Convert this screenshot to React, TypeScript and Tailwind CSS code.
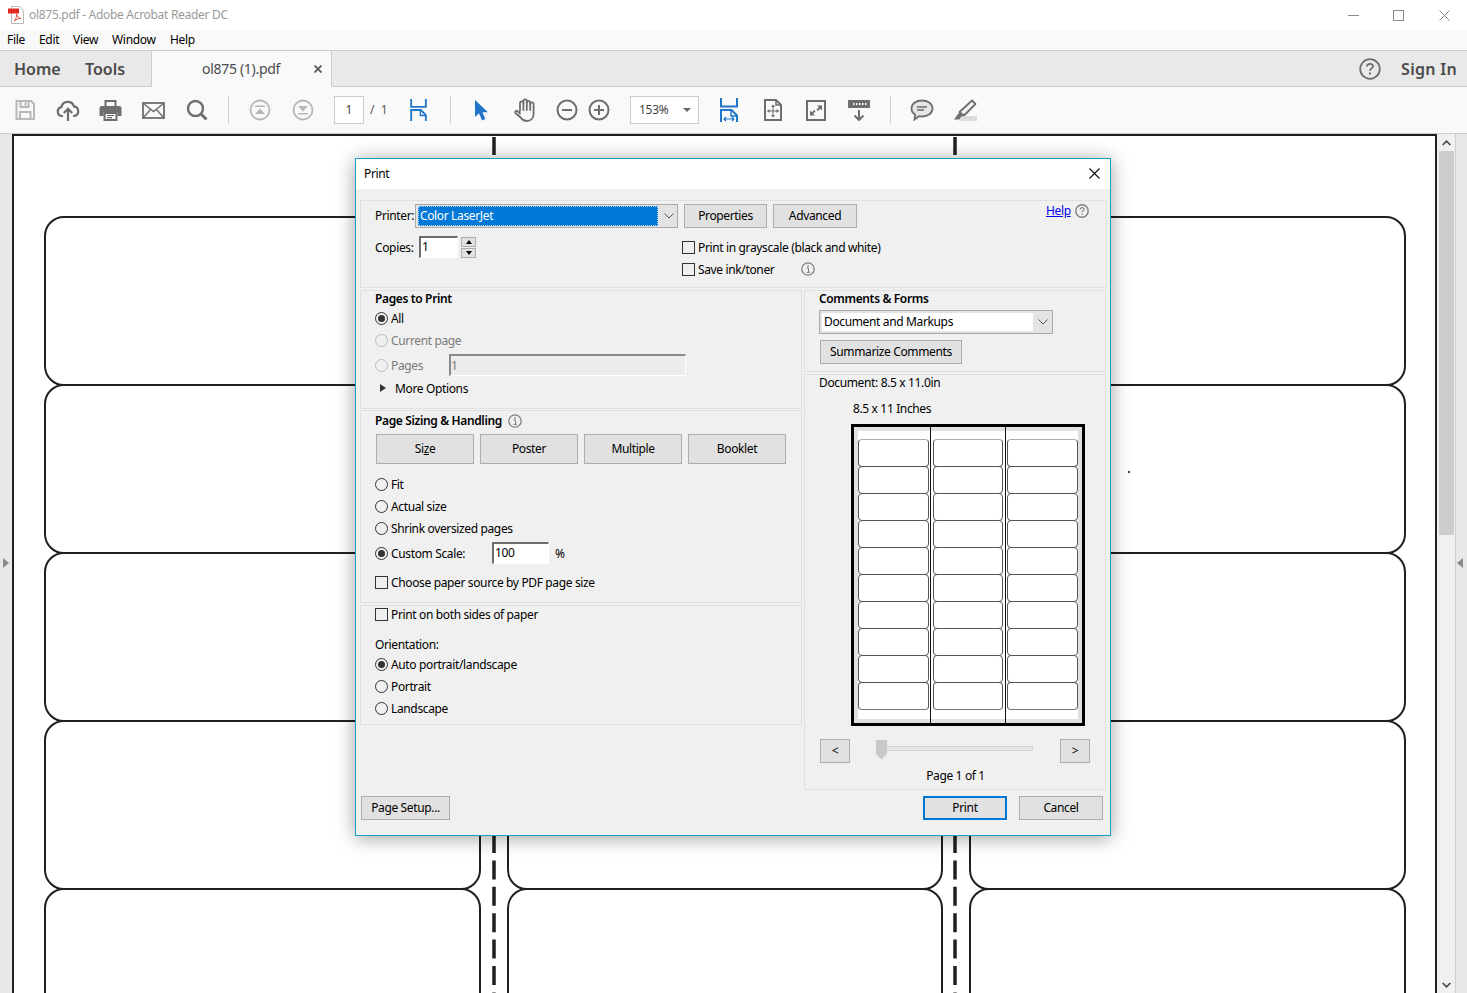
import React from "react";

const F = "font-['Noto_Sans','Liberation_Sans',sans-serif]";
const GRAY = "#6e6e6e";
const DIS = "#b8b8b8";
const BLUE = "#2274c9";

function Slot({ w, children, cls = "" }: { w: string; children: React.ReactNode; cls?: string }) {
  return <div className={`flex items-center justify-center shrink-0 ${w} ${cls}`}>{children}</div>;
}
function Sep({ ml }: { ml: string }) {
  return <div className={`w-px h-[28px] bg-[#cfcfcf] shrink-0 ${ml}`} />;
}

const Ico = {
  Save: () => (
    <svg width="22" height="22" viewBox="0 0 22 22" fill="none" stroke={DIS} strokeWidth="2">
      <path d="M2.500 2h14.500l3 3v15H2.500z" />
      <path d="M6.500 2v6h8V2M11.500 3.500v3M6 20v-7h10.500v7" />
    </svg>
  ),
  Upload: () => (
    <svg width="24" height="24" viewBox="0 0 24 24" fill="none" stroke={GRAY} strokeWidth="2.200">
      <path d="M7 18H6a4.500 4.500 0 0 1-.6-8.900A6.500 6.500 0 0 1 18 8.400 4.900 4.900 0 0 1 18.500 18H17" />
      <path d="M12 23V11M7.800 15l4.200-4.300 4.200 4.300" />
    </svg>
  ),
  Print: () => (
    <svg width="23" height="22" viewBox="0 0 23 22">
      <path d="M5.500 1h12v6h-2V3h-8v4h-2z" fill={GRAY} />
      <path d="M2.500 7h18a2 2 0 0 1 2 2v8h-4v-4h-14v4h-4V9a2 2 0 0 1 2-2z" fill={GRAY} />
      <path d="M5.500 14h12v7h-12z" fill="none" stroke={GRAY} strokeWidth="2" />
      <path d="M8 16.500h7M8 18.700h5" stroke={GRAY} strokeWidth="1.200" />
    </svg>
  ),
  Mail: () => (
    <svg width="23" height="17" viewBox="0 0 23 17" fill="none" stroke={GRAY} strokeWidth="1.800">
      <rect x="1" y="1" width="21" height="15" />
      <path d="M1.500 1.500 11.500 9.500 21.500 1.500M1.500 15.500 8.500 7.500M21.500 15.500 14.500 7.500" strokeWidth="1.400" />
    </svg>
  ),
  Search: () => (
    <svg width="22" height="22" viewBox="0 0 22 22" fill="none" stroke={GRAY} strokeWidth="2.400">
      <circle cx="9.500" cy="9.500" r="7.500" />
      <path d="m15 15 5.500 5.500" strokeWidth="3" />
    </svg>
  ),
  First: () => (
    <svg width="22" height="22" viewBox="0 0 22 22" fill="none">
      <circle cx="11" cy="11" r="9.500" stroke={DIS} strokeWidth="1.800" />
      <path d="M6 6.500h10v1.600H6zM11 9.500l5 5.500H6z" fill={DIS} />
    </svg>
  ),
  Last: () => (
    <svg width="22" height="22" viewBox="0 0 22 22" fill="none">
      <circle cx="11" cy="11" r="9.500" stroke={DIS} strokeWidth="1.800" />
      <path d="M6 14h10v1.600H6zM11 12.500 6 7h10z" fill={DIS} />
    </svg>
  ),
  FitTop: ({ arrow }: { arrow?: boolean }) => (
    <svg width={arrow ? 18 : 17} height={arrow ? 24 : 22} viewBox="0 0 18 24" fill="none" stroke={BLUE} strokeWidth="2">
      <path d="M1 0v8.500h16V0" />
      <path d="M1 24V12h10.500l5.500 5.500V24" />
      <path d="M11 12v6h6" strokeWidth="1.500" />
      {arrow && <path d="M4 21h10M6 19l-2 2 2 2M12 19l2 2-2 2" strokeWidth="1.200" />}
    </svg>
  ),
  Cursor: () => (
    <svg width="14" height="21" viewBox="0 0 14 21">
      <path d="M1 0v17l4-3.700L8 20.500l3.400-1.500-3-6.800h5.600z" fill={BLUE} />
    </svg>
  ),
  Hand: () => (
    <svg width="24" height="24" viewBox="0 0 24 24" fill="none" stroke={GRAY} strokeWidth="1.800" strokeLinecap="round" strokeLinejoin="round">
      <path d="M6 13V5a1.700 1.700 0 0 1 3.400 0V3a1.700 1.700 0 0 1 3.400 0v1.500a1.700 1.700 0 0 1 3.400 0V6a1.700 1.700 0 0 1 3.400 0v10c0 4-2.500 7-7 7-3 0-4.500-1.300-6-3.500L1.500 15c-1-1.500 1-3 2.300-1.700L6 15.500" />
      <path d="M9.400 5v7M12.800 4v8M16.200 5v7" />
    </svg>
  ),
  Minus: () => (
    <svg width="22" height="22" viewBox="0 0 22 22" fill="none" stroke={GRAY} strokeWidth="2">
      <circle cx="11" cy="11" r="9.500" />
      <path d="M6 11h10" />
    </svg>
  ),
  Plus: () => (
    <svg width="22" height="22" viewBox="0 0 22 22" fill="none" stroke={GRAY} strokeWidth="2">
      <circle cx="11" cy="11" r="9.500" />
      <path d="M6 11h10M11 6v10" />
    </svg>
  ),
  FitPage: () => (
    <svg width="18" height="22" viewBox="0 0 18 22" fill="none" stroke={GRAY}>
      <path d="M1 1h11l5 5v15H1z" strokeWidth="2" />
      <path d="M12 1v5h5" strokeWidth="1.500" />
      <path d="M3.500 12h11M9 6.500v11" strokeWidth="1" />
      <path d="M9 5.500l-2 2.500h4zM9 18.500l-2-2.500h4zM3 12l2.500-2v4zM15 12l-2.500-2v4z" fill={GRAY} stroke="none" />
    </svg>
  ),
  Full: () => (
    <svg width="20" height="21" viewBox="0 0 20 21" fill="none">
      <rect x="1" y="1" width="18" height="19" stroke={GRAY} strokeWidth="2" />
      <path d="M11 5.500h5v5l-1.800-1.800-2.400 2.400-1.400-1.400 2.400-2.400zM9 15.500H4v-5l1.800 1.800 2.400-2.400 1.400 1.400-2.400 2.400z" fill={GRAY} />
    </svg>
  ),
  Read: () => (
    <svg width="22" height="22" viewBox="0 0 22 22" fill="none">
      <path d="M0 1h22v8H0z" fill={GRAY} />
      <path d="M5 4h1.500v2H5zM8 4h1.500v2H8zM11 4h1.500v2H11zM14 4h1.500v2H14zM17 4h1.500v2H17z" fill="#fff" />
      <path d="M11 11v10M6.500 16.500l4.500 4.500 4.500-4.500" stroke={GRAY} strokeWidth="2" />
    </svg>
  ),
  Comment: () => (
    <svg width="24" height="22" viewBox="0 0 24 22" fill="none">
      <path d="M12 1.500c6 0 10.500 3.400 10.500 8 0 4.700-4.500 8-10.500 8-1 0-2-.1-3-.3L4.500 20.500l.7-4.700C3 14.300 1.500 12 1.500 9.500c0-4.600 4.500-8 10.500-8z" fill="#e6e6e6" stroke={GRAY} strokeWidth="1.800" />
      <path d="M7 8h10M7 11h7" stroke={GRAY} strokeWidth="1.300" />
    </svg>
  ),
  Mark: () => (
    <svg width="24" height="22" viewBox="0 0 24 22" fill="none">
      <path d="M6 17h18v5H6z" fill="#dcdcdc" />
      <path d="M19 1.500l3.500 3.500-10.500 10.500-4.500 1-1-3.500z" fill="#f4f4f4" stroke={GRAY} strokeWidth="1.800" strokeLinejoin="round" />
      <path d="M7 12l5 5-5 .5-2-2z" fill={GRAY} />
      <path d="M5 15l3 3-2 2.500H1z" fill={GRAY} />
    </svg>
  ),
};

function PdfIcon() {
  return (
    <svg width="16" height="18" viewBox="0 0 16 18" fill="none" className="shrink-0">
      <path d="M3.500.5h8l4 4v13h-12z" fill="#fff" stroke="#b9b9b9" />
      <path d="M0 2.500h11v5H0z" fill="#e02a20" />
      <path d="M6 15c2-1.500 3-5 2.500-7 1 3 2.500 4 4.500 4.500-2-.2-5 .8-7 2.500z" fill="none" stroke="#e02a20" strokeWidth=".8" />
    </svg>
  );
}

function Radio({ label, on, off, cls = "" }: { label: string; on?: boolean; off?: boolean; cls?: string }) {
  return (
    <div className={`flex items-center h-[22px] ${cls}`}>
      <span className={`flex items-center justify-center w-[13px] h-[13px] rounded-full border shrink-0 ${off ? "border-[#bcbcbc]" : "border-[#333]"}`}>
        {on && <span className="w-[7px] h-[7px] rounded-full bg-[#333]" />}
      </span>
      <span className={`ml-[3px] pt-[2px] ${off ? "text-[#7a7a7a]" : ""}`}>{label}</span>
    </div>
  );
}
function Check({ label, cls = "" }: { label: string; cls?: string }) {
  return (
    <div className={`flex items-center ${cls}`}>
      <span className="w-[13px] h-[13px] border border-[#333] shrink-0" />
      <span className="ml-[3px] pt-[2px]">{label}</span>
    </div>
  );
}
function Btn({ w, children, cls = "" }: { w: string; children: React.ReactNode; cls?: string }) {
  return (
    <div className={`flex items-center justify-center h-[24px] bg-[#e1e1e1] border border-[#adadad] shrink-0 ${w} ${cls}`}>
      {children}
    </div>
  );
}
function Sunken({ w, children, cls = "" }: { w: string; children: React.ReactNode; cls?: string }) {
  return (
    <div className={`flex items-center pl-[1px] pb-[1px] h-[22px] border-t-2 border-l-2 border-t-[#6d6d6d] border-l-[#6d6d6d] border-r border-b border-r-white border-b-white shrink-0 ${w} ${cls}`}>
      {children}
    </div>
  );
}
function Info({ cls = "" }: { cls?: string }) {
  return (
    <svg width="14" height="14" viewBox="0 0 14 14" fill="none" className={`shrink-0 ${cls}`}>
      <circle cx="7" cy="7" r="6.200" stroke="#808080" strokeWidth="1.300" />
      <path d="M5.500 6h2v4h1M5.500 10.400h3.500" stroke="#808080" strokeWidth="1" />
      <path d="M6.300 3.200h1.500v1.500H6.300z" fill="#808080" />
    </svg>
  );
}
function Chevron() {
  return (
    <svg width="10" height="6" viewBox="0 0 10 6" fill="none" stroke="#555" strokeWidth="1">
      <path d="M.5.500 5 5l4.500-4.500" />
    </svg>
  );
}

const PANEL = "border border-[#e0e0e0]";

function Preview() {
  const rows = Array.from({ length: 10 }, (_, i) => i);
  return (
    <div className="relative w-[234px] h-[302px] ml-[46px] mt-[7px] border-[3px] border-black bg-[#e0e0e0] p-[4px]">
      <div className="h-[288px] bg-white pt-[8px]">
        <div className="grid grid-cols-[71px_70px_71px] gap-x-[4px]">
          {rows.flatMap((r) =>
            [0, 1, 2].map((c) => (
              <div
                key={`${r}-${c}`}
                className={`h-[28px] rounded-[4px] border border-[#555] ${r > 0 ? "mt-[-1px]" : ""} ${r === 0 ? "border-t-[#aaa]" : ""} ${r === 9 ? "border-b-[#777]" : ""}`}
              />
            ))
          )}
        </div>
      </div>
      <div className="absolute left-[76px] top-0 bottom-0 w-px bg-[#111]" />
      <div className="absolute left-[151px] top-0 bottom-0 w-px bg-[#111]" />
    </div>
  );
}

function PrintDialog() {
  return (
    <div className={`absolute left-[355px] top-[158px] w-[756px] h-[678px] border border-[#1a9fc4] bg-[#f0f0f0] shadow-[0_2px_18px_rgba(0,0,0,0.38)] text-[12px] leading-[16px] text-black ${F} tracking-[-0.36px]`}>
      <div className="h-[30px] bg-white flex items-center justify-between pl-[8px] pr-[10px]">
        <span>Print</span>
        <svg width="11" height="11" viewBox="0 0 11 11" stroke="#111" strokeWidth="1.200" className="mb-[2px]">
          <path d="M.5.500l10 10M10.500.500l-10 10" />
        </svg>
      </div>
      <div className="pl-[4px] pt-[11px]">
        <div className={`w-[747px] h-[88px] ${PANEL}`}>
          <div className="flex items-center h-[24px] mt-[3px] pl-[14px]">
            <span className="w-[40px]">Printer:</span>
            <div className="flex items-center w-[263px] h-[24px] bg-[#e3e3e3] border border-[#a9a9a9] pl-[2px]">
              <div className="w-[240px] h-[20px] bg-[#0078d7] text-white flex items-center pl-[1px] border border-dotted border-[#a8cdf0]">Color LaserJet</div>
              <span className="ml-[6px]"><Chevron /></span>
            </div>
            <Btn w="w-[83px]" cls="ml-[6px]">Properties</Btn>
            <Btn w="w-[84px]" cls="ml-[6px]">Advanced</Btn>
            <div className="flex items-center ml-[189px] self-start mt-[-1px]">
              <span className="text-[#0000ee] underline">Help</span>
              <svg width="14" height="14" viewBox="0 0 14 14" fill="none" className="ml-[4px]">
                <circle cx="7" cy="7" r="6.200" stroke="#808080" strokeWidth="1.400" />
                <path d="M5.200 5.400c0-2.400 3.800-2.400 3.800-.2 0 1.400-2 1.500-2 3" stroke="#808080" strokeWidth="1.200" />
                <path d="M6.400 9.500h1.300v1.300H6.400z" fill="#808080" />
              </svg>
            </div>
          </div>
          <div className="flex mt-[8px] pl-[14px]">
            <span className="w-[44px] h-[22px] pt-[4px]">Copies:</span>
            <Sunken w="w-[39px]" cls="bg-white">1</Sunken>
            <div className="ml-[3px] w-[15px] flex flex-col gap-px pt-px">
              <div className="h-[10px] bg-[#e1e1e1] border border-[#adadad] flex items-center justify-center">
                <span className="w-0 h-0 border-x-[3px] border-x-transparent border-b-[4px] border-b-black" />
              </div>
              <div className="h-[10px] bg-[#e1e1e1] border border-[#adadad] flex items-center justify-center">
                <span className="w-0 h-0 border-x-[3px] border-x-transparent border-t-[4px] border-t-black" />
              </div>
            </div>
            <div className="ml-[206px]">
              <Check label="Print in grayscale (black and white)" cls="h-[22px]" />
              <div className="flex items-center">
                <Check label="Save ink/toner" cls="h-[22px] w-[119px]" />
                <Info />
              </div>
            </div>
          </div>
        </div>

        <div className="flex mt-[2px]">
          <div className="w-[442px]">
            <div className={`h-[119px] pl-[14px] ${PANEL}`}>
              <div className="h-[16px] flex items-center font-semibold">Pages to Print</div>
              <Radio label="All" on />
              <Radio label="Current page" off />
              <div className="flex items-center mt-[3px]">
                <Radio label="Pages" off cls="w-[74px]" />
                <div className="flex items-center w-[237px] h-[22px] border-t-2 border-l-2 border-t-[#8a8a8a] border-l-[#8a8a8a] border-r border-b border-r-white border-b-white bg-[#ececec] text-[#7a7a7a]">1</div>
              </div>
              <div className="flex items-center h-[22px] mt-px pl-[5px]">
                <span className="w-0 h-0 border-y-[4px] border-y-transparent border-l-[6px] border-l-[#333]" />
                <span className="ml-[9px] pt-[2px]">More Options</span>
              </div>
            </div>
            <div className={`h-[193px] mt-px pl-[14px] ${PANEL}`}>
              <div className="h-[19px] flex items-center font-semibold">
                Page Sizing &amp; Handling
                <Info cls="ml-[6px]" />
              </div>
              <div className="flex gap-[6px] mt-[4px] ml-px">
                <Btn w="w-[98px]" cls="h-[30px]!"><span>Si<span className="underline">z</span>e</span></Btn>
                <Btn w="w-[98px]" cls="h-[30px]!">Poster</Btn>
                <Btn w="w-[98px]" cls="h-[30px]!">Multiple</Btn>
                <Btn w="w-[98px]" cls="h-[30px]!">Booklet</Btn>
              </div>
              <Radio label="Fit" cls="mt-[9px]" />
              <Radio label="Actual size" />
              <Radio label="Shrink oversized pages" />
              <div className="flex items-center mt-[3px]">
                <Radio label="Custom Scale:" on cls="w-[117px]" />
                <Sunken w="w-[57px]" cls="bg-white">100</Sunken>
                <span className="ml-[6px] pt-[1px]">%</span>
              </div>
              <Check label="Choose paper source by PDF page size" cls="h-[22px] mt-[7px]" />
            </div>
            <div className={`h-[120px] mt-[2px] pl-[14px] ${PANEL}`}>
              <Check label="Print on both sides of paper" cls="h-[16px]" />
              <div className="h-[18px] mt-[13px] pt-[2px]">Orientation:</div>
              <Radio label="Auto portrait/landscape" on />
              <Radio label="Portrait" />
              <Radio label="Landscape" />
            </div>
          </div>

          <div className="w-[302px] ml-[2px]">
            <div className={`h-[82px] pl-[14px] ${PANEL}`}>
              <div className="h-[15px] flex items-center font-semibold">Comments &amp; Forms</div>
              <div className="flex items-center w-[234px] h-[24px] mt-[4px] bg-[#e3e3e3] border border-[#a9a9a9] pl-[2px]">
                <div className="w-[211px] h-[18px] bg-white flex items-center pl-[2px]">Document and Markups</div>
                <span className="ml-[5px]"><Chevron /></span>
              </div>
              <Btn w="w-[142px]" cls="mt-[6px] ml-px">Summarize Comments</Btn>
            </div>
            <div className={`h-[416px] mt-[2px] ${PANEL}`}>
              <div className="h-[15px] flex items-center pl-[14px]">Document: 8.5 x 11.0in</div>
              <div className="h-[16px] mt-[11px] flex items-center pl-[48px]">8.5 x 11 Inches</div>
              <Preview />
              <div className="flex items-center mt-[13px] ml-[15px]">
                <Btn w="w-[30px]">&lt;</Btn>
                <div className="relative self-start mt-[7px] w-[157px] h-[5px] ml-[26px] bg-[#e4e4e4] border border-[#d4d4d4]">
                  <svg width="12" height="20" viewBox="0 0 12 20" className="absolute left-[-1px] top-[-7px]">
                    <path d="M0 0h11v14l-5.500 5.500L0 14z" fill="#c8c8c8" />
                  </svg>
                </div>
                <Btn w="w-[30px]" cls="ml-[27px]">&gt;</Btn>
              </div>
              <div className="h-[16px] mt-[5px] flex justify-center items-center pl-px">Page 1 of 1</div>
            </div>
          </div>
        </div>

        <div className="flex items-center mt-[6px] ml-px">
          <Btn w="w-[89px]">Page Setup...</Btn>
          <Btn w="w-[84px]" cls="ml-[473px] border-2! border-[#0078d7]!">Print</Btn>
          <Btn w="w-[84px]" cls="ml-[12px]">Cancel</Btn>
        </div>
      </div>
    </div>
  );
}

function LabelColumn({ w }: { w: string }) {
  return (
    <div className={`${w} shrink-0 pt-[80px]`}>
      {[0, 1, 2, 3, 4].map((i) => (
        <div key={i} className={`h-[170px] rounded-[20px] border-2 border-[#231f20] ${i > 0 ? "mt-[-2px]" : ""}`} />
      ))}
    </div>
  );
}
function Gutter({ x }: { x: number }) {
  return (
    <svg width="26" height="857" viewBox="0 0 26 857" className="shrink-0">
      <path d={`M${x} 1v18`} stroke="#231f20" strokeWidth="3.500" />
      <path d={`M${x} 698v159`} stroke="#231f20" strokeWidth="3.500" strokeDasharray="19 7.400" />
    </svg>
  );
}

export default function App() {
  return (
    <div className={`relative w-full h-screen overflow-hidden flex flex-col bg-white ${F}`}>
      {/* Title bar */}
      <div className="h-[30px] flex items-center bg-white shrink-0 pl-[8px] text-[12px] text-[#9a9a9a] tracking-[-0.3px]">
        <PdfIcon />
        <span className="ml-[5px]">ol875.pdf - Adobe Acrobat Reader DC</span>
        <div className="ml-auto flex items-center">
          <Slot w="w-[45px]">
            <svg width="11" height="11" viewBox="0 0 11 11" stroke="#8a8a8a"><path d="M0 5.500h11" /></svg>
          </Slot>
          <Slot w="w-[45px]">
            <svg width="11" height="11" viewBox="0 0 11 11" fill="none" stroke="#8a8a8a"><rect x=".5" y=".5" width="10" height="10" /></svg>
          </Slot>
          <Slot w="w-[46px]">
            <svg width="11" height="11" viewBox="0 0 11 11" stroke="#8a8a8a"><path d="M.5.500l10 10M10.500.500l-10 10" /></svg>
          </Slot>
        </div>
      </div>
      {/* Menu bar */}
      <div className="h-[20px] flex items-center bg-[#f9f9f9] shrink-0 pl-[7px] text-[12px] text-black tracking-[-0.3px]">
        <span className="w-[32px]">File</span>
        <span className="w-[34px]">Edit</span>
        <span className="w-[39px]">View</span>
        <span className="w-[58px]">Window</span>
        <span>Help</span>
      </div>
      {/* Tab bar */}
      <div className="h-[37px] flex items-stretch bg-[#e9e9e9] border-y border-[#cccccc] shrink-0 text-[#4b4b4b]">
        <div className="w-[151px] flex items-center pl-[14px] text-[16px] font-semibold">
          <span className="w-[71px]">Home</span>
          <span>Tools</span>
        </div>
        <div className="w-[181px] flex items-center bg-[#f9f9f9] border-x border-[#cccccc] mb-[-1px] text-[14px] tracking-[-0.3px]">
          <span className="ml-[50px] w-[112px] pb-[1px]">ol875 (1).pdf</span>
          <svg width="8" height="8" viewBox="0 0 8 8" stroke="#5a5a5a" strokeWidth="1.800"><path d="M.5.500l7 7M7.500.500l-7 7" /></svg>
        </div>
        <div className="ml-auto flex items-center pr-[10px]">
          <svg width="22" height="22" viewBox="0 0 22 22" fill="none">
            <circle cx="11" cy="11" r="9.800" stroke={GRAY} strokeWidth="1.800" />
            <path d="M8 8.400c0-3.400 6-3.400 6-.2 0 2.200-3 2.200-3 4.600" stroke={GRAY} strokeWidth="1.800" />
            <path d="M10 14.600h2v2h-2z" fill={GRAY} />
          </svg>
          <span className="ml-[20px] text-[16px] font-semibold tracking-[0.3px]">Sign In</span>
        </div>
      </div>
      {/* Toolbar */}
      <div className="h-[47px] flex items-center bg-[#f9f9f9] border-b border-[#cccccc] shrink-0 pl-[3px] text-[12px] text-[#444]">
        <Slot w="w-[43px]"><Ico.Save /></Slot>
        <Slot w="w-[43px]"><Ico.Upload /></Slot>
        <Slot w="w-[43px]"><Ico.Print /></Slot>
        <Slot w="w-[43px]"><Ico.Mail /></Slot>
        <Slot w="w-[43px]"><Ico.Search /></Slot>
        <Sep ml="ml-[10px]" />
        <Slot w="w-[43px]" cls="ml-[9px]"><Ico.First /></Slot>
        <Slot w="w-[43px]"><Ico.Last /></Slot>
        <div className="ml-[10px] w-[30px] h-[28px] bg-white border border-[#cccccc] flex items-center justify-center">1</div>
        <div className="w-[36px] pl-[6px] text-[#555]">/&nbsp;&nbsp;1</div>
        <Slot w="w-[36px]"><Ico.FitTop /></Slot>
        <Sep ml="ml-[14px]" />
        <Slot w="w-[36px]" cls="ml-[12px]"><Ico.Cursor /></Slot>
        <Slot w="w-[36px]" cls="ml-[9px]"><Ico.Hand /></Slot>
        <Slot w="w-[32px]" cls="ml-[7px]"><Ico.Minus /></Slot>
        <Slot w="w-[32px]"><Ico.Plus /></Slot>
        <div className="ml-[15px] w-[69px] h-[28px] bg-white border border-[#cccccc] flex items-center pl-[8px] tracking-[-0.3px]">
          153%
          <span className="ml-auto mr-[7px] w-0 h-0 border-x-[4px] border-x-transparent border-t-[4px] border-t-[#666]" />
        </div>
        <Slot w="w-[44px]" cls="ml-[8px]"><Ico.FitTop arrow /></Slot>
        <Slot w="w-[43px]"><Ico.FitPage /></Slot>
        <Slot w="w-[43px]"><Ico.Full /></Slot>
        <Slot w="w-[43px]"><Ico.Read /></Slot>
        <Sep ml="ml-[10px]" />
        <Slot w="w-[43px]" cls="ml-[9px]"><Ico.Comment /></Slot>
        <Slot w="w-[43px]"><Ico.Mark /></Slot>
      </div>
      {/* Document area */}
      <div className="flex flex-1 min-h-0 bg-[#e8e8e8]">
        <div className="w-[12px] shrink-0 flex items-center pl-[3px] pb-[2px]">
          <span className="w-0 h-0 border-y-[5px] border-y-transparent border-l-[6px] border-l-[#8a8a8a]" />
        </div>
        <div className="relative w-[1425px] shrink-0 bg-white border-x-2 border-t-2 border-[#231f20] pl-[30px] flex items-start overflow-hidden">
          <LabelColumn w="w-[437px]" />
          <Gutter x={13} />
          <LabelColumn w="w-[436px]" />
          <Gutter x={12} />
          <LabelColumn w="w-[437px]" />
          <span className="absolute left-[1114px] top-[335px] w-[2px] h-[2px] bg-[#444]" />
        </div>
        <div className="w-[19px] shrink-0 bg-[#f0f0f0] flex flex-col items-center border-r border-[#cfcfcf]">
          <svg width="9" height="6" viewBox="0 0 9 6" fill="none" stroke="#444" strokeWidth="1.600" className="mt-[6px]">
            <path d="M.7 5 4.500 1.200 8.300 5" />
          </svg>
          <div className="w-[15px] h-[384px] bg-[#cdcdcd] mt-[5px]" />
          <svg width="9" height="6" viewBox="0 0 9 6" fill="none" stroke="#444" strokeWidth="1.600" className="mt-auto mb-[5px]">
            <path d="M.7 1 4.500 4.800 8.300 1" />
          </svg>
        </div>
        <div className="flex-1 flex items-center pl-[1px] pb-[2px]">
          <span className="w-0 h-0 border-y-[5px] border-y-transparent border-r-[6px] border-r-[#8a8a8a]" />
        </div>
      </div>
      <PrintDialog />
    </div>
  );
}
